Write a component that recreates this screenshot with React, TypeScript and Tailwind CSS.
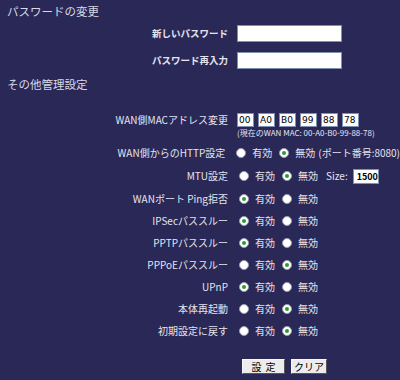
import type { ReactNode } from "react";

const font = { fontFamily: '"Noto Sans CJK JP", "Liberation Sans", sans-serif' };

function Radio({ checked }: { checked?: boolean }) {
  return (
    <span className="inline-flex w-[10px] h-[10px] rounded-full bg-white border border-[#9a9ab0] items-center justify-center">
      {checked && <span className="w-[4px] h-[4px] rounded-full bg-[#22a02a]" />}
    </span>
  );
}

function Row({ label, children, h = "h-[22px]" }: { label: string; children: ReactNode; h?: string }) {
  return (
    <div className={`flex items-center ${h}`}>
      <div className="w-[228px] text-right text-[10px] leading-[12px] whitespace-nowrap">{label}</div>
      <div className="ml-[11px] flex items-center text-[10px] leading-[12px] whitespace-nowrap">{children}</div>
    </div>
  );
}

function OnOff({ on, extra }: { on: boolean; extra?: ReactNode }) {
  return (
    <>
      <Radio checked={on} />
      <span className="ml-[6px]">有効</span>
      <span className="ml-[7px] flex">
        <Radio checked={!on} />
      </span>
      <span className="ml-[6px]">無効</span>
      {extra}
    </>
  );
}

export default function App() {
  const mac = ["00", "A0", "B0", "99", "88", "78"];
  return (
    <div className="w-[400px] h-[380px] bg-[#2a2856] text-[#e4e4ee] overflow-hidden" style={font}>
      <div className="pl-[7px] pt-[4px] text-[11.5px] leading-[14px] text-[#d8d8e6]">パスワードの変更</div>

      <div className="mt-[7px] flex items-center h-[17px]">
        <div className="w-[228px] text-right text-[9.5px] font-bold">新しいパスワード</div>
        <input className="ml-[9px] w-[105px] h-[17px] bg-white border border-[#7f8fb0]" />
      </div>
      <div className="mt-[10px] flex items-center h-[17px]">
        <div className="w-[228px] text-right text-[9.5px] font-bold">パスワード再入力</div>
        <input className="ml-[9px] w-[105px] h-[17px] bg-white border border-[#7f8fb0]" />
      </div>

      <div className="pl-[7px] mt-[8px] text-[11.5px] leading-[14px] text-[#d8d8e6]">その他管理設定</div>

      <div className="mt-[22px] flex">
        <div className="w-[228px] text-right text-[10px] leading-[14px]">WAN側MACアドレス変更</div>
        <div className="ml-[9px] flex flex-col">
          <div className="flex gap-[4px]">
            {mac.map((m) => (
              <div
                key={m}
                className="w-[17px] h-[14px] bg-white border border-[#7f8fb0] text-black text-[9px] leading-[12px] pl-[1px]"
                style={{ fontFamily: '"DejaVu Sans", sans-serif' }}
              >
                {m}
              </div>
            ))}
          </div>
          <div className="mt-[1px] text-[8px] leading-[10px] whitespace-nowrap">
            (現在のWAN MAC: 00-A0-B0-99-88-78)
          </div>
        </div>
      </div>

      <div className="mt-[4px]">
        <Row label="WAN側からのHTTP設定">
          <OnOff on={false} extra={<span className="ml-[3px]">(ポート番号:8080)</span>} />
        </Row>
        <Row label="MTU設定" h="h-[24px]">
          <OnOff
            on={false}
            extra={
              <>
                <span className="ml-[8px]">Size:</span>
                <div className="ml-[5px] w-[26px] h-[15px] bg-white border border-[#7f8fb0] text-black text-[9px] leading-[13px] pl-[3px] font-bold">
                  1500
                </div>
              </>
            }
          />
        </Row>
        <Row label="WANポート Ping拒否">
          <OnOff on={true} />
        </Row>
        <Row label="IPSecパススルー">
          <OnOff on={true} />
        </Row>
        <Row label="PPTPパススルー">
          <OnOff on={true} />
        </Row>
        <Row label="PPPoEパススルー">
          <OnOff on={false} />
        </Row>
        <Row label="UPnP">
          <OnOff on={true} />
        </Row>
        <Row label="本体再起動">
          <OnOff on={false} />
        </Row>
        <Row label="初期設定に戻す">
          <OnOff on={false} />
        </Row>
      </div>

      <div className="mt-[17px] flex pl-[242px] gap-[6px]">
        <button className="w-[43px] h-[15px] bg-[#ececec] border border-[#f8f8f8] border-r-[#555] border-b-[#555] text-black text-[10px] leading-[12px] tracking-[4px] pl-[4px]">
          設定
        </button>
        <button className="w-[36px] h-[15px] bg-[#ececec] border border-[#f8f8f8] border-r-[#555] border-b-[#555] text-black text-[10px] leading-[12px]">
          クリア
        </button>
      </div>
    </div>
  );
}
